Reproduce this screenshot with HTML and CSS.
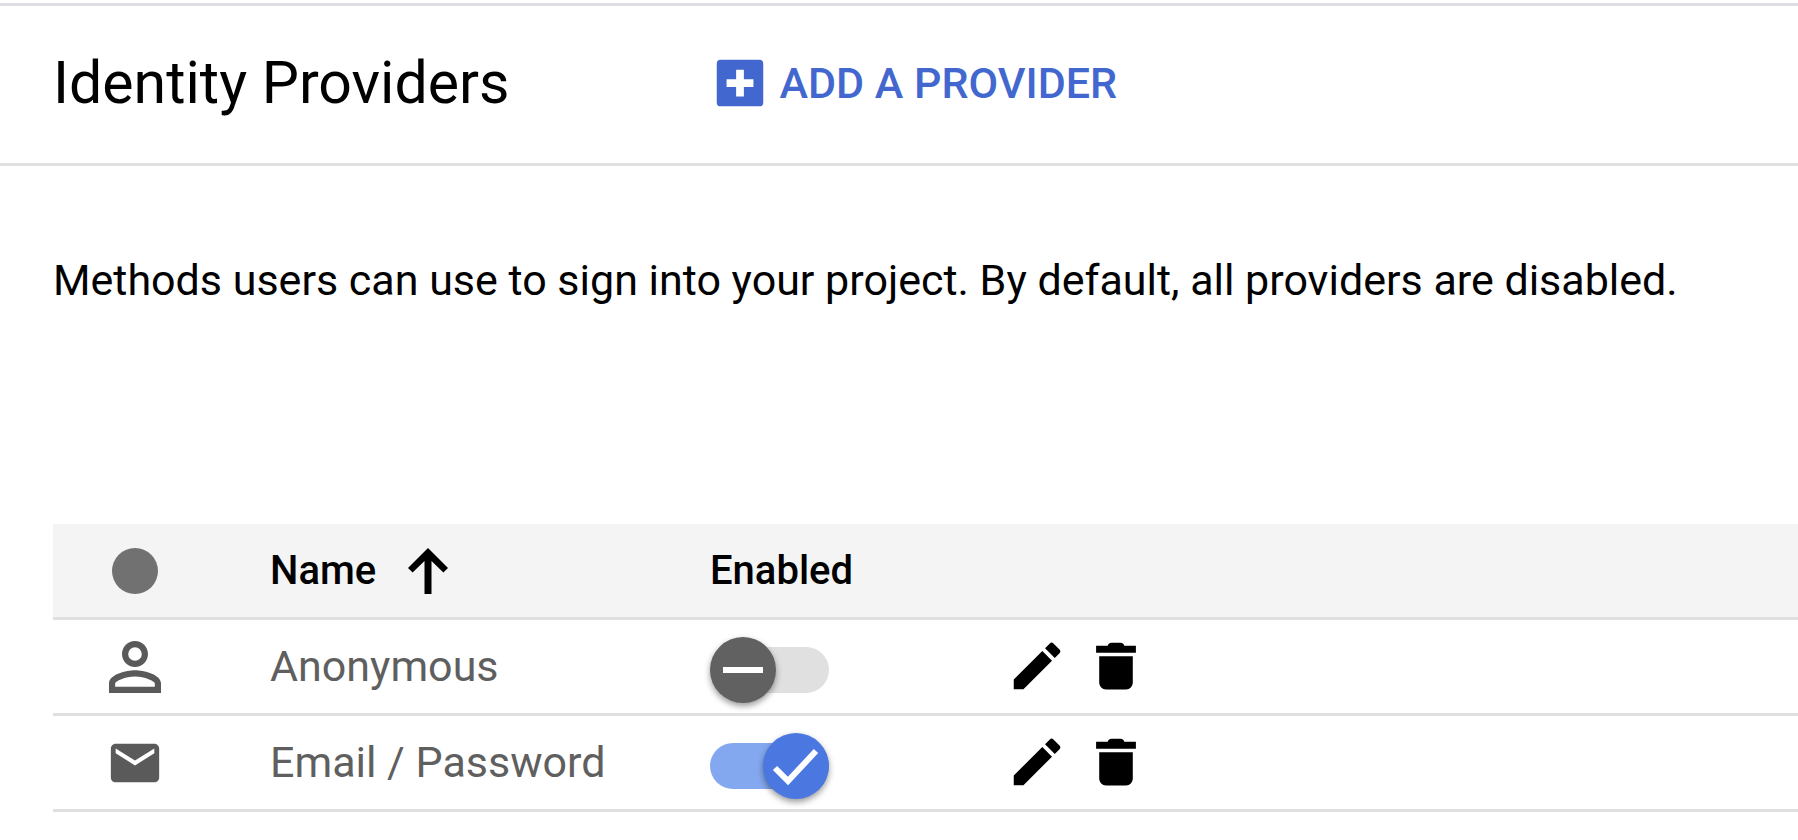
FILE: index.html
```html
<!DOCTYPE html>
<html lang="en">
<head>
<meta charset="utf-8">
<title>Identity Providers</title>
<link rel="stylesheet" href="styles.css">
</head>
<body>
<svg class="defs" aria-hidden="true">
  <symbol id="edit" viewBox="0 0 24 24"><path d="M3 17.25V21h3.75L17.81 9.94l-3.75-3.75L3 17.25zM20.71 7.04a1 1 0 0 0 0-1.41l-2.34-2.34a1 1 0 0 0-1.41 0l-1.83 1.83 3.75 3.75 1.83-1.83z"/></symbol>
  <symbol id="trash" viewBox="0 0 24 24"><path d="M5.500 8.200h13v10.300a2.600 2.600 0 0 1-2.600 2.600H8.100a2.600 2.600 0 0 1-2.600-2.600zM4.300 4.200h4.500c.2-.8.700-1.200 1.400-1.200h3.600c.7 0 1.200.4 1.400 1.200h4.500v2.700H4.300z"/></symbol>
</svg>
<header class="toolbar">
  <h1 class="title">Identity Providers</h1>
  <button class="add" type="button">
    <svg class="icon" viewBox="0 0 24 24" aria-hidden="true"><path fill-rule="evenodd" d="M4.500 3h15A1.500 1.500 0 0 1 21 4.500v15a1.500 1.500 0 0 1-1.500 1.500h-15A1.500 1.500 0 0 1 3 19.500v-15A1.500 1.500 0 0 1 4.500 3zM10.500 6.900v3.600H6.800v3h3.700v3.700h3v-3.700h3.700v-3h-3.700V6.900z"/></svg>
    <span>ADD A PROVIDER</span>
  </button>
</header>
<main class="content">
  <p class="intro">Methods users can use to sign into your project. By default, all providers are disabled.</p>
  <table class="providers">
    <colgroup><col class="col-icon"><col class="col-name"><col class="col-enabled"><col></colgroup>
    <thead>
      <tr>
        <th class="mark"><span class="dot"></span></th>
        <th aria-sort="ascending"><button class="sort" type="button">Name
          <svg class="arrow" viewBox="0 0 40 46" aria-hidden="true"><path d="M20 0 40 20l-4.600 4.600L23.500 13v33h-7V13L4.600 24.600 0 20z"/></svg></button></th>
        <th>Enabled</th>
        <th></th>
      </tr>
    </thead>
    <tbody>
      <tr>
        <td class="mark"><svg class="person" viewBox="0 0 24 24" aria-hidden="true"><path d="M12 5.900a2.100 2.100 0 1 1 0 4.200 2.100 2.100 0 0 1 0-4.200m0 9c2.970 0 6.100 1.460 6.100 2.100v1.100H5.900V17c0-.64 3.130-2.100 6.100-2.100M12 4C9.790 4 8 5.790 8 8s1.790 4 4 4 4-1.790 4-4-1.790-4-4-4zm0 9c-2.670 0-8 1.340-8 4v3h16v-3c0-2.660-5.330-4-8-4z"/></svg></td>
        <td><label for="anonymous">Anonymous</label></td>
        <td><span class="switch"><input id="anonymous" class="track" type="checkbox" role="switch"><span class="thumb"><svg viewBox="0 0 66 66" aria-hidden="true"><path d="M13 33h40"/></svg></span></span></td>
        <td><div class="actions"><button type="button" aria-label="Edit Anonymous"><svg class="icon"><use href="#edit"/></svg></button><button type="button" aria-label="Delete Anonymous"><svg class="icon"><use href="#trash"/></svg></button></div></td>
      </tr>
      <tr>
        <td class="mark"><svg class="mail" viewBox="0 0 24 24" aria-hidden="true"><path d="M20 4H4c-1.100 0-1.990.9-1.990 2L2 18c0 1.100.9 2 2 2h16c1.100 0 2-.9 2-2V6c0-1.100-.9-2-2-2zm0 4-8 5-8-5V6l8 5 8-5v2z"/></svg></td>
        <td><label for="email">Email / Password</label></td>
        <td><span class="switch"><input id="email" class="track" type="checkbox" role="switch" checked><span class="thumb"><svg viewBox="0 0 66 66" aria-hidden="true"><path d="M12 35 25 48 53 18"/></svg></span></span></td>
        <td><div class="actions"><button type="button" aria-label="Edit Email / Password"><svg class="icon"><use href="#edit"/></svg></button><button type="button" aria-label="Delete Email / Password"><svg class="icon"><use href="#trash"/></svg></button></div></td>
      </tr>
    </tbody>
  </table>
</main>
</body>
</html>
```

FILE: styles.css
```css
* { box-sizing: border-box; }

body {
  margin: 0;
  padding-top: 3px;
  background: #fff;
  color: #000;
  font-family: Roboto, "Liberation Sans", sans-serif;
}

button {
  padding: 0;
  border: 0;
  background: none;
  color: inherit;
  font: inherit;
  cursor: pointer;
}

svg { display: block; fill: currentColor; }

.defs { position: absolute; width: 0; height: 0; }

.icon { width: 62px; height: 62px; }

.toolbar {
  display: flex;
  align-items: center;
  gap: 200px;
  padding: 41px 0 44px 53px;
  border-top: 3px solid #dedee2;
  border-bottom: 3px solid #e0e0e0;
}

.title {
  margin: 0;
  font-size: 59px;
  font-weight: 400;
  line-height: 72px;
}

.add {
  display: flex;
  align-items: center;
  gap: 8px;
  color: #4268d0;
  font-size: 43px;
  font-weight: 500;
  line-height: 56px;
}

.content { padding: 86px 0 0 53px; }

.intro {
  margin: 0;
  font-size: 43px;
  line-height: 56px;
}

.providers {
  width: 100%;
  margin-top: 216px;
  border-collapse: separate;
  border-spacing: 0;
  table-layout: fixed;
  text-align: left;
}

.col-icon { width: 217px; }
.col-name { width: 440px; }
.col-enabled { width: 296px; }

.providers th,
.providers td {
  height: 96px;
  padding: 0;
  border-bottom: 3px solid #e0e0e0;
  vertical-align: middle;
}

.providers th {
  background: #f4f4f4;
  font-size: 40px;
  font-weight: 500;
  line-height: 48px;
}

.providers td {
  padding-bottom: 2px;
  color: #5f5f5f;
  font-size: 43px;
  line-height: 48px;
}

.providers .mark { padding: 0 53px 0 0; }

.dot {
  display: block;
  width: 46px;
  height: 46px;
  margin: 0 auto;
  border-radius: 50%;
  background: #717171;
}

.person,
.mail { margin: 0 auto; color: #5a5a5a; }
.person { width: 78px; height: 78px; }
.mail { width: 58px; height: 58px; }

.sort {
  display: flex;
  align-items: center;
  gap: 32px;
}

.arrow { width: 40px; height: 46px; }

.switch {
  position: relative;
  display: flex;
  align-items: center;
  width: 119px;
  height: 66px;
  margin-top: 8px;
}

.track {
  width: 100%;
  height: 46px;
  margin: 0;
  border-radius: 23px;
  background: #e0e0e0;
  appearance: none;
}

.track:checked { background: #84a8f0; }

.thumb {
  position: absolute;
  top: 0;
  left: 0;
  width: 66px;
  height: 66px;
  border-radius: 50%;
  background: #616161;
  box-shadow: 0 3px 6px rgba(0, 0, 0, 0.4);
  pointer-events: none;
}

.track:checked + .thumb {
  right: 0;
  left: auto;
  background: #4a78e0;
}

.thumb path {
  fill: none;
  stroke: #fff;
  stroke-width: 6;
}

.actions {
  display: flex;
  gap: 17px;
  color: #000;
}
```
